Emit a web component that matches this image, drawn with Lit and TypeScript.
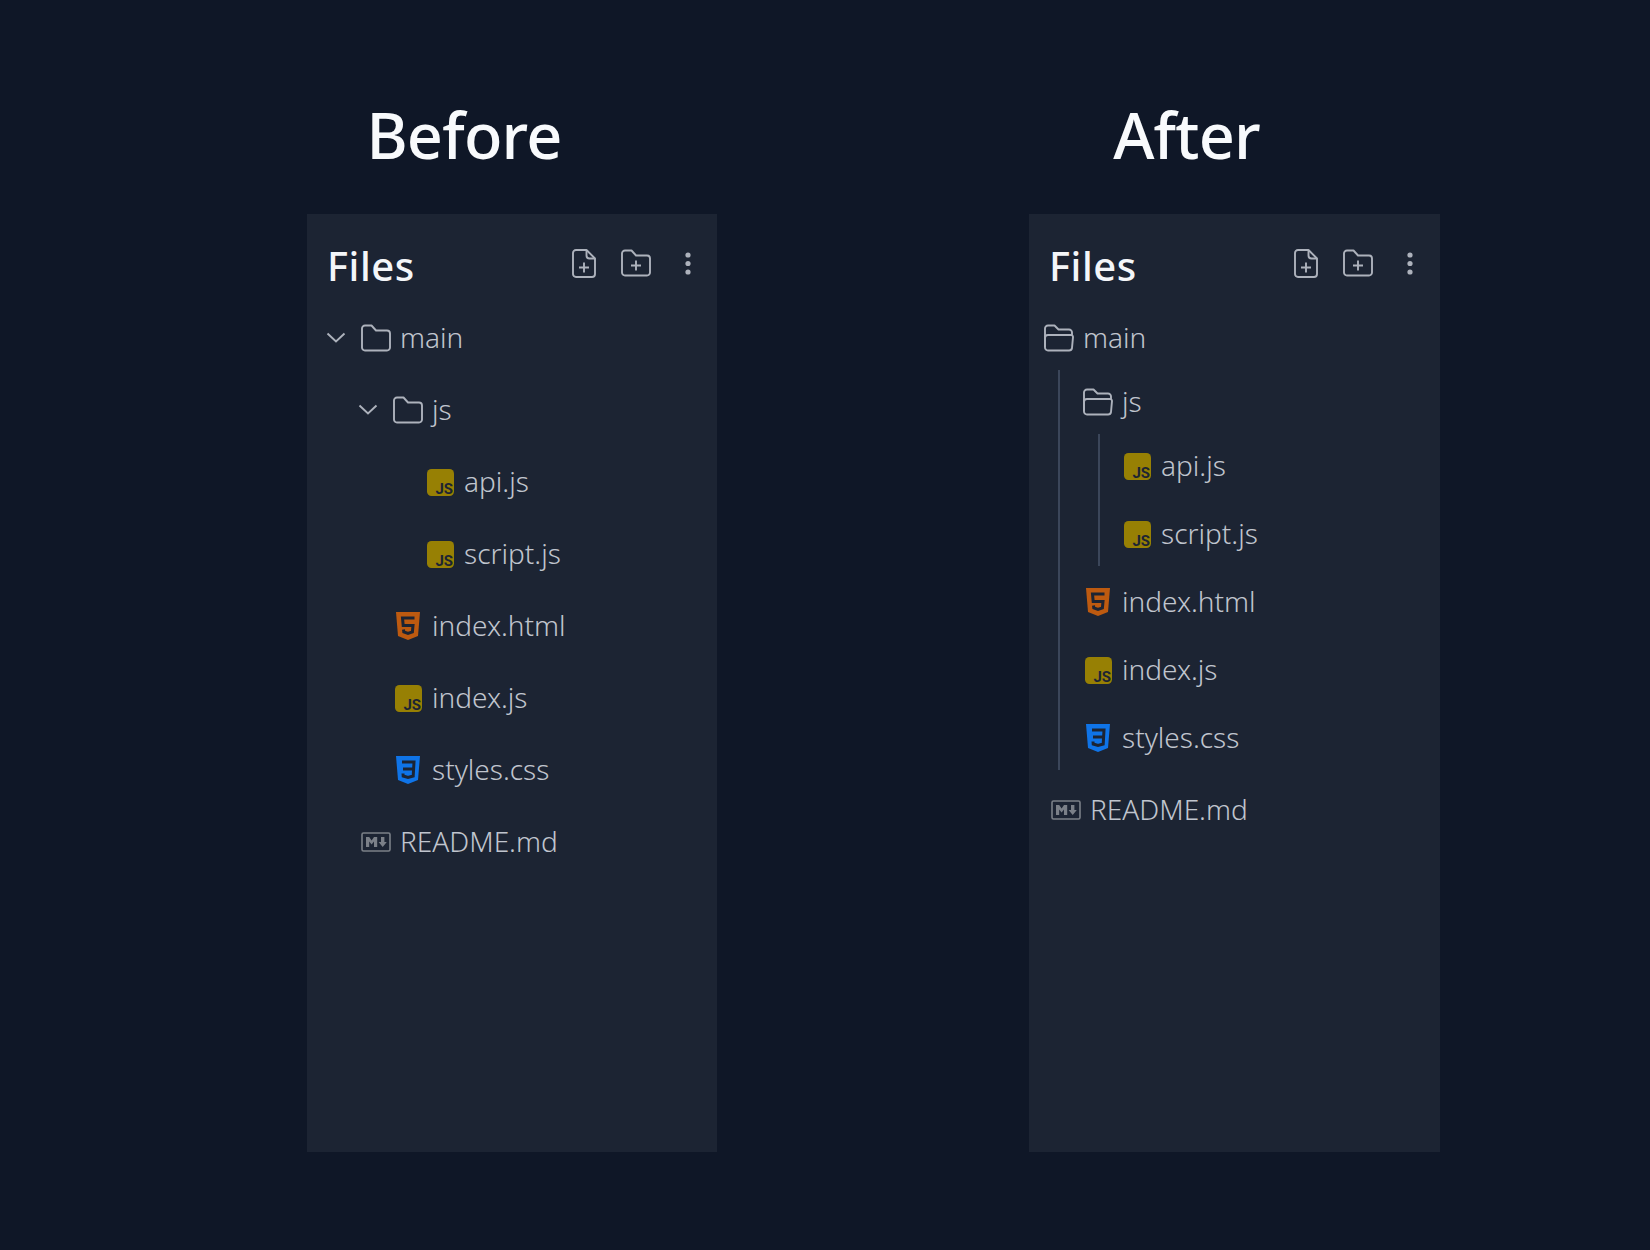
import { LitElement, css, html, svg } from 'lit'
import { customElement } from 'lit/decorators.js'

const jsIcon = html`<svg class="ico" width="27" height="27" viewBox="0 0 27 27">
  <rect width="27" height="27" rx="4.5" fill="#978004"/>
  <text x="26" y="24.5" text-anchor="end" font-family="Roboto, sans-serif" font-weight="700" font-size="15" fill="#1c2433">JS</text>
</svg>`

const htmlIcon = html`<svg class="ico" width="24" height="28" viewBox="0 0 24 28">
  <path d="M0 0H24L22 24L12 28L2 24Z" fill="#bd5a10"/>
  <path d="M18.5 6H6.5L7.2 13.5H17L16.4 20L12 21.5L7.8 20L7.5 17.5" fill="none" stroke="#1c2433" stroke-width="3"/>
</svg>`

const cssIcon = html`<svg class="ico" width="24" height="28" viewBox="0 0 24 28">
  <path d="M0 0H24L22 24L12 28L2 24Z" fill="#0f74e8"/>
  <path d="M6 6H18L17.2 20L12 21.5L7.2 20L7 17.5M7 13H17.5" fill="none" stroke="#1c2433" stroke-width="3"/>
</svg>`

const mdIcon = html`<svg class="ico" width="30" height="20" viewBox="0 0 30 20">
  <rect x="1" y="1" width="28" height="18" rx="1.5" fill="none" stroke="#7b8088" stroke-width="1.6"/>
  <path d="M5 15V5H8.2L10.6 8.6L13 5H16.2V15H13V9.6L10.6 12.6L8.2 9.6V15Z" fill="#7b8088"/>
  <path d="M20 5H23.4V10H25.8L21.7 15L17.6 10H20Z" fill="#7b8088"/>
</svg>`

const folderPath = svg`<path d="M4 1.5H10.5L15 6.5H26A3 3 0 0 1 29 9.5V23.5A3 3 0 0 1 26 26.5H4A3 3 0 0 1 1 23.5V4.5A3 3 0 0 1 4 1.5Z" fill="none" stroke="currentColor" stroke-width="1.9" stroke-linejoin="round"/>`

const folderIcon = html`<svg class="ico line" width="30" height="28" viewBox="0 0 30 28">${folderPath}</svg>`

const folderOpenIcon = html`<svg class="ico line" width="30" height="28" viewBox="0 0 30 28" fill="none" stroke="currentColor" stroke-width="1.9" stroke-linejoin="round">
  <path d="M1 23V4.5A3 3 0 0 1 4 1.5H10.5L14.5 5.5H25A3 3 0 0 1 28 8.5V11"/>
  <path d="M4 11H27A2 2 0 0 1 29 13.2L28 24A3 3 0 0 1 25 26.5H4A3 3 0 0 1 1 23.5V14A3 3 0 0 1 4 11Z"/>
</svg>`

const chevron = html`<span class="caret"><svg width="20" height="11" viewBox="0 0 20 11">
  <path d="M1.5 1.5L10 9.5L18.5 1.5" fill="none" stroke="currentColor" stroke-width="1.9"/>
</svg></span>`

const newFile = html`<svg width="24" height="29" viewBox="0 0 24 29" fill="none" stroke="currentColor" stroke-width="1.9" stroke-linejoin="round">
  <path d="M4 1H14.5L23 9.5V25A3 3 0 0 1 20 28H4A3 3 0 0 1 1 25V4A3 3 0 0 1 4 1Z"/>
  <path d="M14.5 1V6.5A3 3 0 0 0 17.5 9.5H23"/>
  <path d="M12 13.5V23.5M7 18.5H17"/>
</svg>`

const newFolder = html`<svg width="30" height="28" viewBox="0 0 30 28" fill="none" stroke="currentColor" stroke-width="1.9" stroke-linejoin="round">
  ${folderPath}
  <path d="M15 11.5V21.5M10 16.5H20"/>
</svg>`

const dots = html`<svg width="6" height="23" viewBox="0 0 6 23" fill="currentColor">
  <circle cx="3" cy="3" r="2.6"/><circle cx="3" cy="11.5" r="2.6"/><circle cx="3" cy="20" r="2.6"/>
</svg>`

@customElement('app-root')
export class AppRoot extends LitElement {
  static styles = css`
    :host {
      display: block;
      min-height: 1250px;
      background: #0f1727;
      font-family: 'Noto Sans', sans-serif;
    }

    .page {
      display: flex;
      gap: 312px;
      padding: 90px 0 0 307px;
    }

    .col { width: 410px; }
    .col + .col { width: 411px; }

    h1 {
      margin: 0;
      height: 124px;
      padding-right: 96px;
      font-size: 63px;
      line-height: 90px;
      font-weight: 500;
      letter-spacing: -0.8px;
      text-align: center;
      color: #f8fafc;
    }

    .panel {
      height: 938px;
      background: #1c2433;
      color: #c0c5ce;
    }

    .head {
      display: flex;
      align-items: center;
      box-sizing: border-box;
      height: 88px;
      padding: 14px 26px 0 20px;
    }
    .col + .col .head { padding-right: 27px; }

    .head h2 {
      flex: 1;
      margin: 0;
      font-size: 40px;
      font-weight: 500;
      letter-spacing: 0.5px;
      color: #f4f6f9;
    }

    .tools {
      display: flex;
      align-items: center;
      color: #adb2bc;
      margin-top: -4px;
    }
    .tools svg { display: block; }
    .tools svg:nth-child(2) { margin: 0 34px 0 25px; }

    .row {
      display: flex;
      align-items: center;
      gap: 9px;
      font-size: 28px;
      font-weight: 300;
      white-space: nowrap;
    }
    .name { margin-bottom: 2px; }

    .ico { display: block; }
    .line, .caret { color: #adb2bc; }

    .slot {
      flex: none;
      width: 30px;
      display: flex;
      justify-content: center;
    }

    .caret {
      flex: none;
      display: flex;
      width: 26px;
      margin: -2px 0 0 -35px;
    }

    .before { padding-left: 54px; }
    .before .row { height: 72px; }
    .nest { padding-left: 32px; }

    .after { padding: 4px 0 0 15px; }
    .after .row { height: 68px; }
    .after .row.dir { height: 64px; }
    .branch {
      display: flex;
      flex-direction: column;
      margin-left: 14px;
      padding-left: 23px;
      border-left: 2px solid #3b465a;
    }
    .branch.inner { margin: 0 0 2px 15px; padding-left: 22px; }
    .branch.inner .row:first-child { margin-top: -2px; }
    .branch .row:last-child { margin-bottom: -2px; }
    .after .row.readme { height: 72px; margin: 4px 0 0 7px; }
  `

  private row(icon: unknown, name: string, extra = '') {
    return html`<div class="row ${extra}"><span class="slot">${icon}</span><span class="name">${name}</span></div>`
  }

  private dir(name: string) {
    return html`<div class="row">${chevron}<span class="slot">${folderIcon}</span><span class="name">${name}</span></div>`
  }

  private header() {
    return html`<div class="head">
      <h2>Files</h2>
      <div class="tools">${newFile}${newFolder}${dots}</div>
    </div>`
  }

  render() {
    return html`<div class="page">
      <section class="col">
        <h1>Before</h1>
        <div class="panel">
          ${this.header()}
          <div class="before">
            ${this.dir('main')}
            <div class="nest">
              ${this.dir('js')}
              <div class="nest">
                ${this.row(jsIcon, 'api.js')}
                ${this.row(jsIcon, 'script.js')}
              </div>
              ${this.row(htmlIcon, 'index.html')}
              ${this.row(jsIcon, 'index.js')}
              ${this.row(cssIcon, 'styles.css')}
            </div>
            ${this.row(mdIcon, 'README.md')}
          </div>
        </div>
      </section>
      <section class="col">
        <h1>After</h1>
        <div class="panel">
          ${this.header()}
          <div class="after">
            ${this.row(folderOpenIcon, 'main', 'dir')}
            <div class="branch">
              ${this.row(folderOpenIcon, 'js', 'dir')}
              <div class="branch inner">
                ${this.row(jsIcon, 'api.js')}
                ${this.row(jsIcon, 'script.js')}
              </div>
              ${this.row(htmlIcon, 'index.html')}
              ${this.row(jsIcon, 'index.js')}
              ${this.row(cssIcon, 'styles.css')}
            </div>
            ${this.row(mdIcon, 'README.md', 'readme')}
          </div>
        </div>
      </section>
    </div>`
  }
}
